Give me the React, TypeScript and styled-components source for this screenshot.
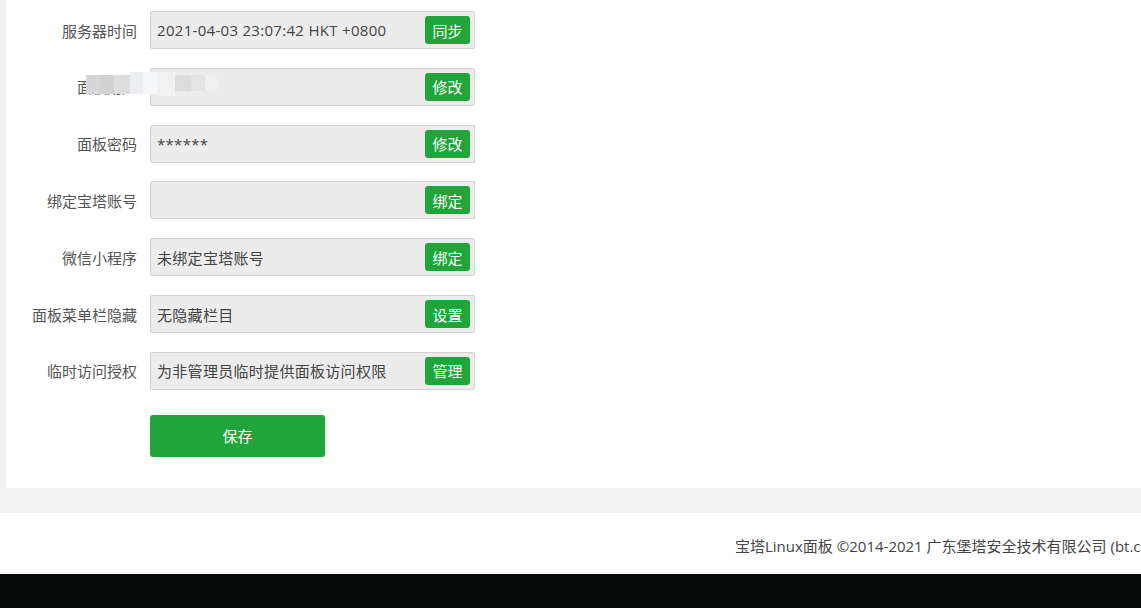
import React from "react";
import styled, { createGlobalStyle } from "styled-components";

const Global = createGlobalStyle`
  html, body { margin: 0; padding: 0; background: #f1f1f1; }
  body {
    font-family: "Open Sans", "Noto Sans", "Noto Sans CJK SC", sans-serif;
    font-size: 15px;
    color: #555;
    overflow: hidden;
  }
  * { box-sizing: border-box; }
`;

const Page = styled.div`
  width: 1141px;
  height: 608px;
  display: flex;
  flex-direction: column;
  background: #f1f1f1;
`;

const Panel = styled.div`
  margin-left: 6px;
  height: 488px;
  background: #fff;
  padding-top: 11px;
  display: flex;
  flex-direction: column;
`;

const Form = styled.div`
  display: flex;
  flex-direction: column;
  gap: 18.84px;
`;

const Row = styled.div`
  display: flex;
  align-items: center;
  height: 38px;
  position: relative;
`;

const Label = styled.div`
  width: 131px;
  text-align: right;
  color: #555;
  font-size: 15px;
  margin-right: 13px;
  white-space: nowrap;
`;

const InputBox = styled.div`
  width: 325px;
  height: 38px;
  border: 1px solid #d2d2d2;
  border-radius: 2px;
  background: #ececec;
  display: flex;
  align-items: center;
  justify-content: space-between;
  padding: 0 4px 0 6px;
  color: #444;
  font-size: 15px;
`;

const Value = styled.span<{ $mask?: boolean }>`
  letter-spacing: ${(p) => (p.$mask ? "0.3px" : "0.3px")};
  white-space: nowrap;
`;

const SmallBtn = styled.button`
  width: 45px;
  height: 28px;
  border: none;
  border-radius: 3px;
  background: #20a53a;
  color: #fff;
  font-family: inherit;
  font-size: 15px;
  padding: 0;
  cursor: pointer;
`;

const Mosaic = styled.div`
  position: absolute;
  left: 80px;
  top: 7px;
  display: flex;
  height: 19px;
`;

const Tile = styled.div<{ $c: string; $w: number; $h?: number; $t?: number }>`
  width: ${(p) => p.$w}px;
  height: ${(p) => p.$h ?? 19}px;
  margin-top: ${(p) => p.$t ?? 0}px;
  background: ${(p) => p.$c};
`;

const SaveRow = styled.div`
  margin-top: 25px;
  padding-left: 144px;
`;

const SaveBtn = styled.button`
  width: 175px;
  height: 42px;
  border: none;
  border-radius: 3px;
  background: #20a53a;
  color: #fff;
  font-family: inherit;
  font-size: 15px;
  cursor: pointer;
`;

const Band = styled.div`
  height: 25px;
  background: #f1f1f1;
`;

const Footer = styled.div`
  height: 61px;
  background: #fff;
  display: flex;
  align-items: center;
  padding-left: 735px;
  padding-top: 3px;
  white-space: nowrap;
  overflow: hidden;
  color: #444;
  font-size: 15px;
`;

const BlackBar = styled.div`
  flex: 1;
  background: #070808;
`;

const rows: { label: string; value: string; btn: string; mask?: boolean; hidden?: boolean }[] = [
  { label: "服务器时间", value: "2021-04-03 23:07:42 HKT +0800", btn: "同步" },
  { label: "面板用户", value: "", btn: "修改", hidden: true },
  { label: "面板密码", value: "******", btn: "修改", mask: true },
  { label: "绑定宝塔账号", value: "", btn: "绑定" },
  { label: "微信小程序", value: "未绑定宝塔账号", btn: "绑定" },
  { label: "面板菜单栏隐藏", value: "无隐藏栏目", btn: "设置" },
  { label: "临时访问授权", value: "为非管理员临时提供面板访问权限", btn: "管理" },
];

export default function App() {
  return (
    <>
      <Global />
      <Page>
        <Panel>
          <Form>
            {rows.map((r) => (
              <Row key={r.label}>
                <Label>{r.label}</Label>
                <InputBox>
                  <Value $mask={r.mask}>{r.value}</Value>
                  <SmallBtn>{r.btn}</SmallBtn>
                </InputBox>
                {r.hidden && (
                  <Mosaic>
                    <Tile $c="#d6d6d8" $w={14} />
                    <Tile $c="#d3d1d1" $w={14} />
                    <Tile $c="#dedede" $w={16} />
                    <Tile $c="#eceef1" $w={13} $h={22} $t={-3} />
                    <Tile $c="#f5f6f8" $w={15} $h={22} $t={-3} />
                    <Tile $c="#f1f1f1" $w={17} $h={24} $t={-3} />
                    <Tile $c="#dcdcdc" $w={16} $h={16} />
                    <Tile $c="#e4e4e4" $w={14} $h={16} />
                    <Tile $c="#f0f0f0" $w={12} $h={16} />
                  </Mosaic>
                )}
              </Row>
            ))}
          </Form>
          <SaveRow>
            <SaveBtn>保存</SaveBtn>
          </SaveRow>
        </Panel>
        <Band />
        <Footer>宝塔Linux面板 ©2014-2021 广东堡塔安全技术有限公司 (bt.cn)</Footer>
        <BlackBar />
      </Page>
    </>
  );
}
